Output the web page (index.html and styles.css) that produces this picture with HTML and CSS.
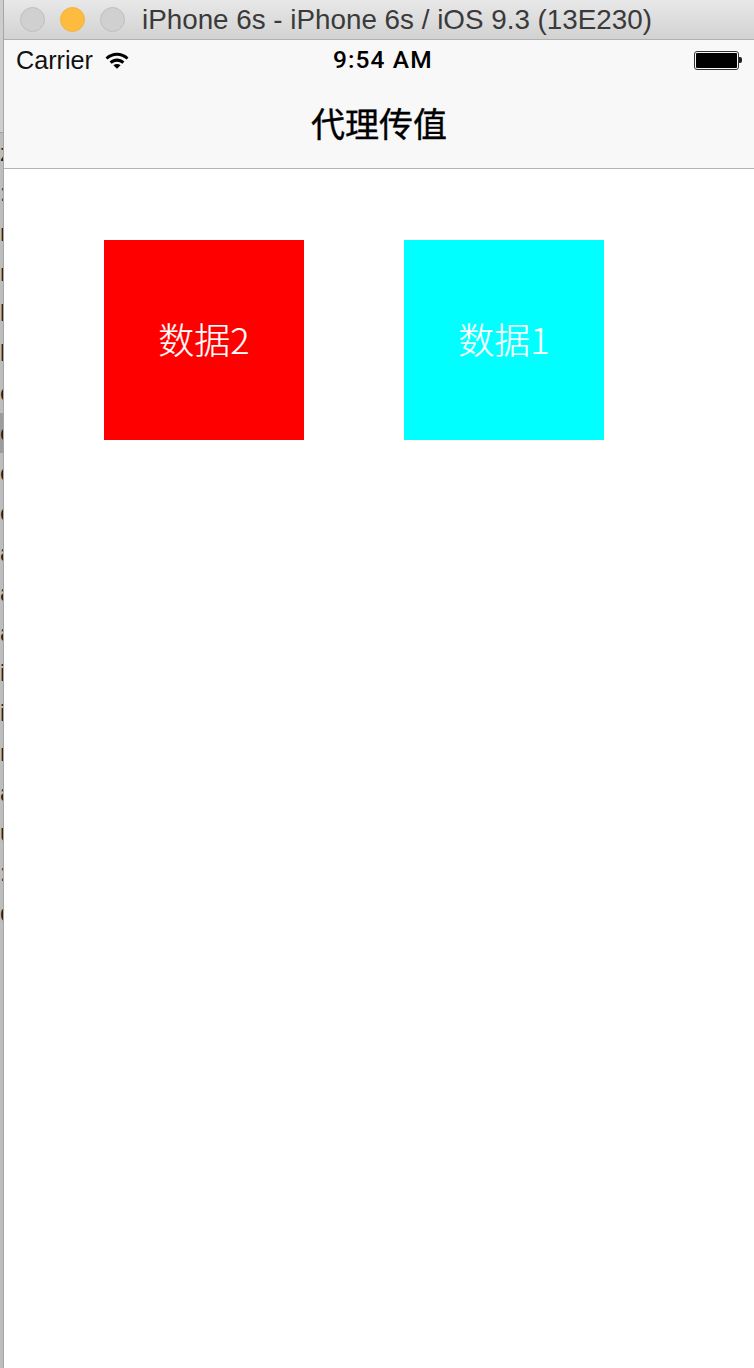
FILE: index.html
```html
<!DOCTYPE html>
<html lang="zh">
<head>
<meta charset="utf-8">
<title>iPhone 6s - iPhone 6s / iOS 9.3 (13E230)</title>
<link rel="stylesheet" href="styles.css">
</head>
<body>
<div class="desktop">
  <aside class="behind">
    <div class="behind-top"></div>
    <div class="line">z</div>
    <div class="line">:</div>
    <div class="line">r</div>
    <div class="line">r</div>
    <div class="line">l</div>
    <div class="line">l</div>
    <div class="line">c</div>
    <div class="line selected">c</div>
    <div class="line">c</div>
    <div class="line">c</div>
    <div class="line">a</div>
    <div class="line">a</div>
    <div class="line">a</div>
    <div class="line">i</div>
    <div class="line">i</div>
    <div class="line">r</div>
    <div class="line">a</div>
    <div class="line">u</div>
    <div class="line">:</div>
    <div class="line">d</div>
  </aside>
  <div class="window-edge"></div>
  <main class="simulator">
    <header class="titlebar">
      <div class="lights">
        <span class="light"></span>
        <span class="light light-min"></span>
        <span class="light"></span>
      </div>
      <div class="window-title">iPhone 6s - iPhone 6s / iOS 9.3 (13E230)</div>
    </header>
    <section class="chrome">
      <div class="statusbar">
        <div class="status-left">
          <span class="carrier">Carrier</span>
          <svg class="wifi" width="24" height="18" viewBox="0 0 24 18">
            <path d="M0.5 6.4C7 0.2 17 0.2 23.5 6.4L21.6 8.5C16 3.4 8 3.4 2.4 8.5Z" fill="#000"/>
            <path d="M4.6 10.6C9 6.6 15 6.6 19.4 10.6L17.4 12.7C14 10 10 10 6.6 12.7Z" fill="#000"/>
            <path d="M8.4 14.2C10.6 12.6 13.4 12.6 15.6 14.2L12 17.8Z" fill="#000"/>
          </svg>
        </div>
        <div class="time">9:54 AM</div>
        <div class="battery">
          <span class="battery-body"><span class="battery-fill"></span></span>
          <span class="battery-tip"></span>
        </div>
      </div>
      <nav class="navbar">
        <h1 class="nav-title">代理传值</h1>
      </nav>
    </section>
    <section class="content">
      <div class="box box-red">数据2</div>
      <div class="box box-cyan">数据1</div>
    </section>
  </main>
</div>
</body>
</html>
```
FILE: styles.css
```css
* { box-sizing: border-box; }
html, body { margin: 0; padding: 0; }
body {
  width: 754px;
  height: 1368px;
  overflow: hidden;
  background: #fff;
  font-family: "Liberation Sans", "Noto Sans CJK SC", sans-serif;
}
.desktop {
  display: flex;
  width: 754px;
  height: 1368px;
}
.behind {
  width: 3px;
  flex: none;
  overflow: hidden;
  background: #bdbdbd;
  color: #222;
  font-size: 24px;
}
.behind-top {
  height: 133px;
  background: #cdcdcd;
  border-bottom: 1px solid #a0a0a0;
}
.line {
  height: 40px;
  line-height: 40px;
  width: 12px;
}
.selected { background: #9c9c9c; }
.window-edge {
  width: 1px;
  flex: none;
  background: #a6a6a6;
}
.simulator {
  flex: 1;
  display: flex;
  flex-direction: column;
  min-width: 0;
}
.titlebar {
  height: 40px;
  flex: none;
  display: flex;
  align-items: center;
  background: linear-gradient(#e9e8e9, #d3d2d3);
  border-bottom: 1px solid #b1b1b1;
  padding-left: 16px;
}
.lights {
  display: flex;
  gap: 15px;
}
.light {
  width: 25px;
  height: 25px;
  border-radius: 50%;
  background: #d0d0d0;
  border: 1px solid #bfbfbf;
}
.light-min {
  background: #fdbc40;
  border-color: #f3b43c;
}
.window-title {
  margin-left: 17px;
  font-family: "Liberation Sans", sans-serif;
  font-size: 27.8px;
  color: #3a3a3a;
  white-space: nowrap;
}
.chrome {
  height: 129px;
  flex: none;
  background: #f8f8f8;
  border-bottom: 1px solid #b4b4b4;
}
.statusbar {
  height: 40px;
  display: flex;
  align-items: center;
  position: relative;
  justify-content: space-between;
  padding: 0 12px 0 12px;
}
.status-left {
  display: flex;
  align-items: center;
  gap: 12px;
}
.carrier {
  font-size: 25.2px;
  color: #111;
}
.wifi { display: block; }
.time {
  position: absolute;
  left: 329px;
  top: 5px;
  font-family: Roboto, sans-serif;
  font-size: 24.5px;
  line-height: 30px;
  font-weight: 500;
  letter-spacing: 1.1px;
  color: #000;
  white-space: nowrap;
}
.battery {
  display: flex;
  align-items: center;
}
.battery-body {
  width: 45px;
  height: 19px;
  border: 1px solid #333;
  border-radius: 3px;
  padding: 1px;
  display: block;
}
.battery-fill {
  display: block;
  width: 100%;
  height: 100%;
  background: #000;
  border-radius: 1px;
}
.battery-tip {
  width: 3px;
  height: 6px;
  background: #222;
  border-radius: 0 2px 2px 0;
}
.navbar {
  height: 88px;
  display: flex;
  align-items: center;
  justify-content: center;
  padding-bottom: 2px;
}
.nav-title {
  margin: 0;
  font-size: 34px;
  line-height: 40px;
  font-weight: 400;
  -webkit-text-stroke: 0.4px #000;
  font-family: "Noto Sans CJK SC", sans-serif;
  color: #000;
}
.content {
  flex: 1;
  background: #fff;
  display: flex;
  gap: 100px;
  padding: 71px 0 0 100px;
  align-items: flex-start;
}
.box {
  width: 200px;
  height: 200px;
  display: flex;
  align-items: center;
  justify-content: center;
  padding-bottom: 5px;
  color: #fff;
  font-size: 36px;
  font-family: "Noto Sans CJK SC", sans-serif;
  font-weight: 300;
  -webkit-text-stroke: 0.2px #fff;
}
.box-red { background: #f00; }
.box-cyan { background: #0ff; }
```
